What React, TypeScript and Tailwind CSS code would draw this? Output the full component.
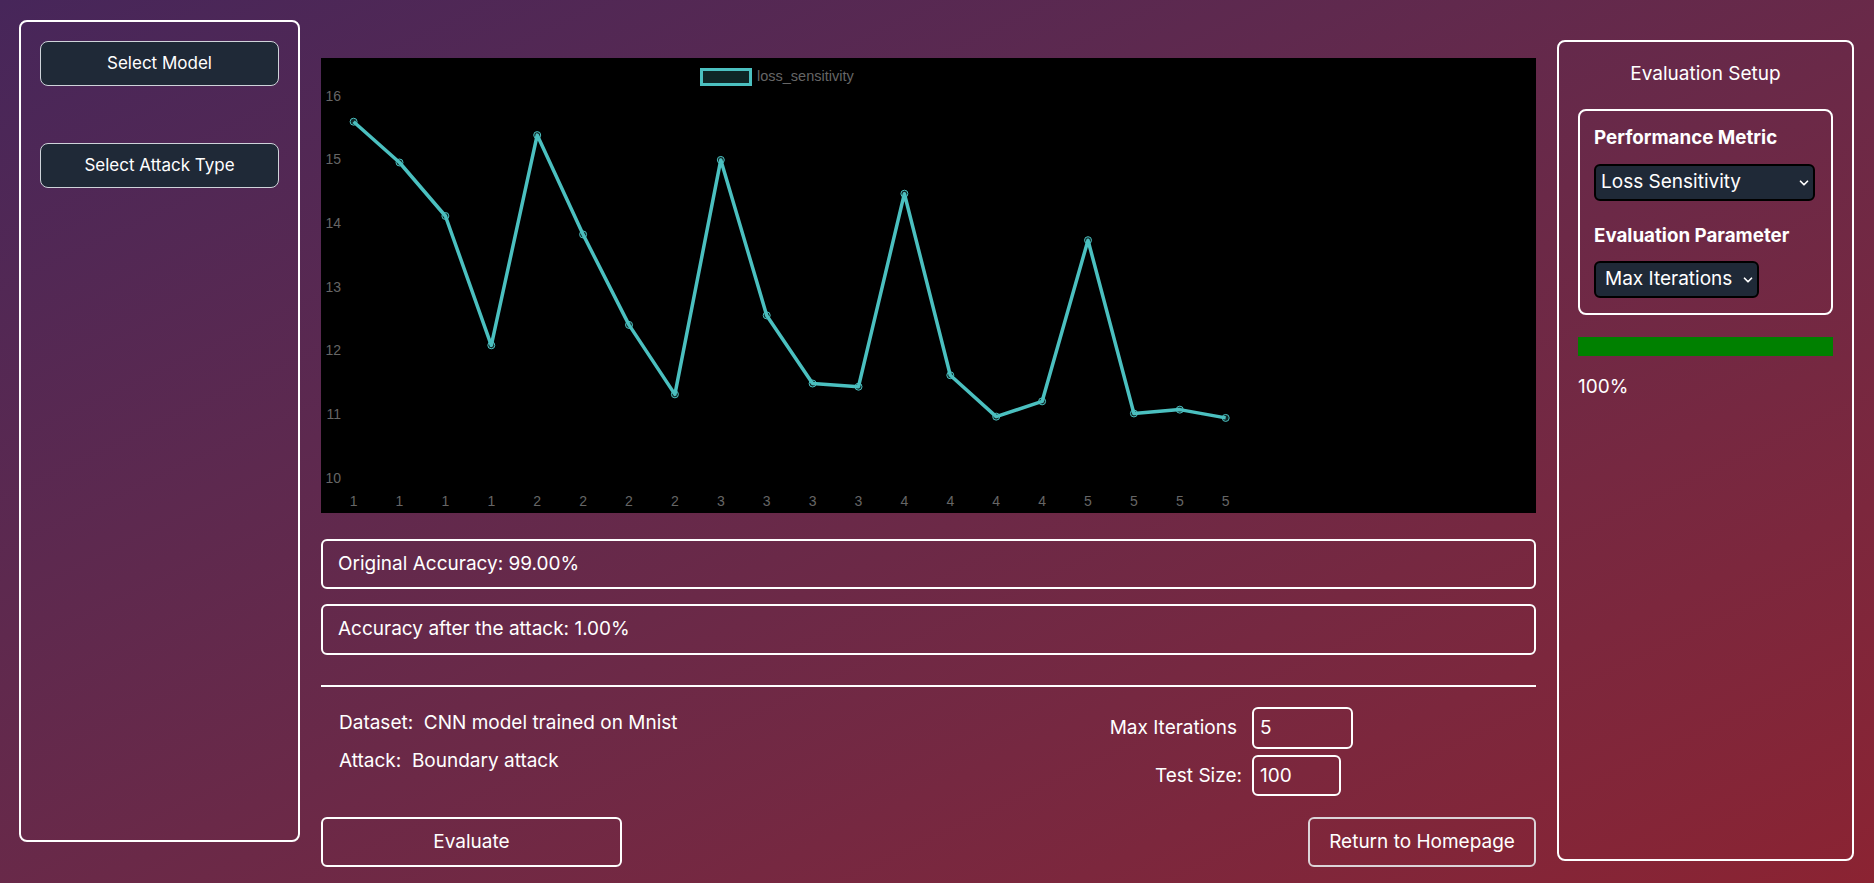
import { ChevronDown } from "lucide-react";

const values = [15.59, 14.95, 14.11, 12.08, 15.38, 13.82, 12.4, 11.31, 14.99, 12.55, 11.48, 11.43, 14.46, 11.61, 10.96, 11.2, 13.73, 11.01, 11.07, 10.94];
const labels = [1, 1, 1, 1, 2, 2, 2, 2, 3, 3, 3, 3, 4, 4, 4, 4, 5, 5, 5, 5];

const px = (i: number) => 32.6 + i * 45.9;
const py = (v: number) => 37.6 + (16 - v) * 63.7;

const LossChart = () => {
    const line = values.map((v, i) => `${px(i).toFixed(1)},${py(v).toFixed(1)}`).join(" ");
    return (
        <svg width="1215" height="455" className="block" style={{ fontFamily: "'Liberation Sans', Arial, sans-serif" }}>
            <rect x="380.5" y="11.5" width="49" height="15" fill="rgba(75,192,192,0.2)" stroke="rgb(75,192,192)" strokeWidth="3" />
            <text x="436" y="23" fontSize="14.5" fill="#666">loss_sensitivity</text>
            {[16, 15, 14, 13, 12, 11, 10].map((t) => (
                <text key={t} x="20" y={py(t) + 5} fontSize="14" fill="#666" textAnchor="end">{t}</text>
            ))}
            {labels.map((l, i) => (
                <text key={i} x={px(i)} y="448" fontSize="14" fill="#666" textAnchor="middle">{l}</text>
            ))}
            <polyline points={line} fill="none" stroke="rgb(75,192,192)" strokeWidth="3.5" strokeLinejoin="round" />
            {values.map((v, i) => (
                <circle key={i} cx={px(i)} cy={py(v)} r="3.5" fill="rgba(75,192,192,0.2)" stroke="rgb(75,192,192)" strokeWidth="1" />
            ))}
        </svg>
    );
};

const FakeSelect = ({ label, className }: { label: string; className: string }) => (
    <div className={`flex items-center justify-between h-[37px] rounded-md border-2 border-black bg-[#1f2937] text-[19px] text-white ${className}`}>
        <span>{label}</span>
        <ChevronDown size={14} strokeWidth={3} />
    </div>
);

export default function App() {
    return (
        <div className="flex min-h-screen w-full gap-[21px] bg-linear-to-br from-[#47265a] to-[#8b2332] px-[19px] font-['Inter',sans-serif] text-white">
            {/* sidebar */}
            <div className="mt-[20px] h-[822px] w-[281px] shrink-0 rounded-lg border-2 border-white px-[19px] pt-[19px]">
                <button className="h-[45px] w-full rounded-lg border border-[#cfd3da] bg-[#1f2937] text-[17px]">Select Model</button>
                <button className="mt-[57px] h-[45px] w-full rounded-lg border border-[#cfd3da] bg-[#1f2937] text-[17px]">Select Attack Type</button>
            </div>

            {/* main */}
            <div className="mt-[58px] w-[1215px] shrink-0">
                <div className="h-[455px] bg-black">
                    <LossChart />
                </div>
                <div className="mt-[26px] flex h-[50px] items-center rounded-md border-2 border-white px-[15px] text-[19px]">Original Accuracy: 99.00%</div>
                <div className="mt-[15px] flex h-[51px] items-center rounded-md border-2 border-white px-[15px] text-[19px]">Accuracy after the attack: 1.00%</div>
                <div className="mt-[30px] h-[2px] bg-white" />

                <div className="mt-[20px] flex justify-between pl-[18px] pr-[183px] text-[19px] leading-7">
                    <div className="flex flex-col gap-[10px] pt-[2px]">
                        <span>Dataset:&nbsp; CNN model trained on Mnist</span>
                        <span>Attack:&nbsp; Boundary attack</span>
                    </div>
                    <div className="flex flex-col gap-[6px]">
                        <div className="flex items-center">
                            <span className="w-[143px] pr-[15px] text-right">Max Iterations</span>
                            <div className="flex h-[42px] w-[101px] items-center rounded-md border-2 border-white pl-[6px]">5</div>
                        </div>
                        <div className="flex items-center pr-[12px]">
                            <span className="w-[143px] pr-[10px] text-right">Test Size:</span>
                            <div className="flex h-[41px] w-[89px] items-center rounded-md border-2 border-white pl-[6px]">100</div>
                        </div>
                    </div>
                </div>

                <div className="mt-[21px] flex justify-between">
                    <button className="h-[50px] w-[301px] rounded-md border-2 border-white text-[19px]">Evaluate</button>
                    <button className="h-[50px] w-[228px] rounded-md border-2 border-[#dcd4d8] text-[19px]">Return to Homepage</button>
                </div>
            </div>

            {/* setup panel */}
            <div className="mt-[40px] h-[821px] w-[297px] shrink-0 rounded-lg border-2 border-white px-[19px] pt-[18px]">
                <div className="text-center text-[19px] leading-7">Evaluation Setup</div>
                <div className="mt-[21px] rounded-lg border-2 border-white pb-[15px] pl-[14px] pt-[13px]">
                    <div className="text-[18.75px] font-bold leading-7">Performance Metric</div>
                    <FakeSelect label="Loss Sensitivity" className="mt-[12px] w-[221px] pl-[5px] pr-[2px]" />
                    <div className="mt-[21px] text-[18.75px] font-bold leading-7">Evaluation Parameter</div>
                    <FakeSelect label="Max Iterations" className="mt-[11px] w-[165px] pl-[9px] pr-[2px]" />
                </div>
                <div className="mt-[22px] h-[19px] bg-[#008000]" />
                <div className="mt-[17px] text-[19px] leading-7">100%</div>
            </div>
        </div>
    );
}
